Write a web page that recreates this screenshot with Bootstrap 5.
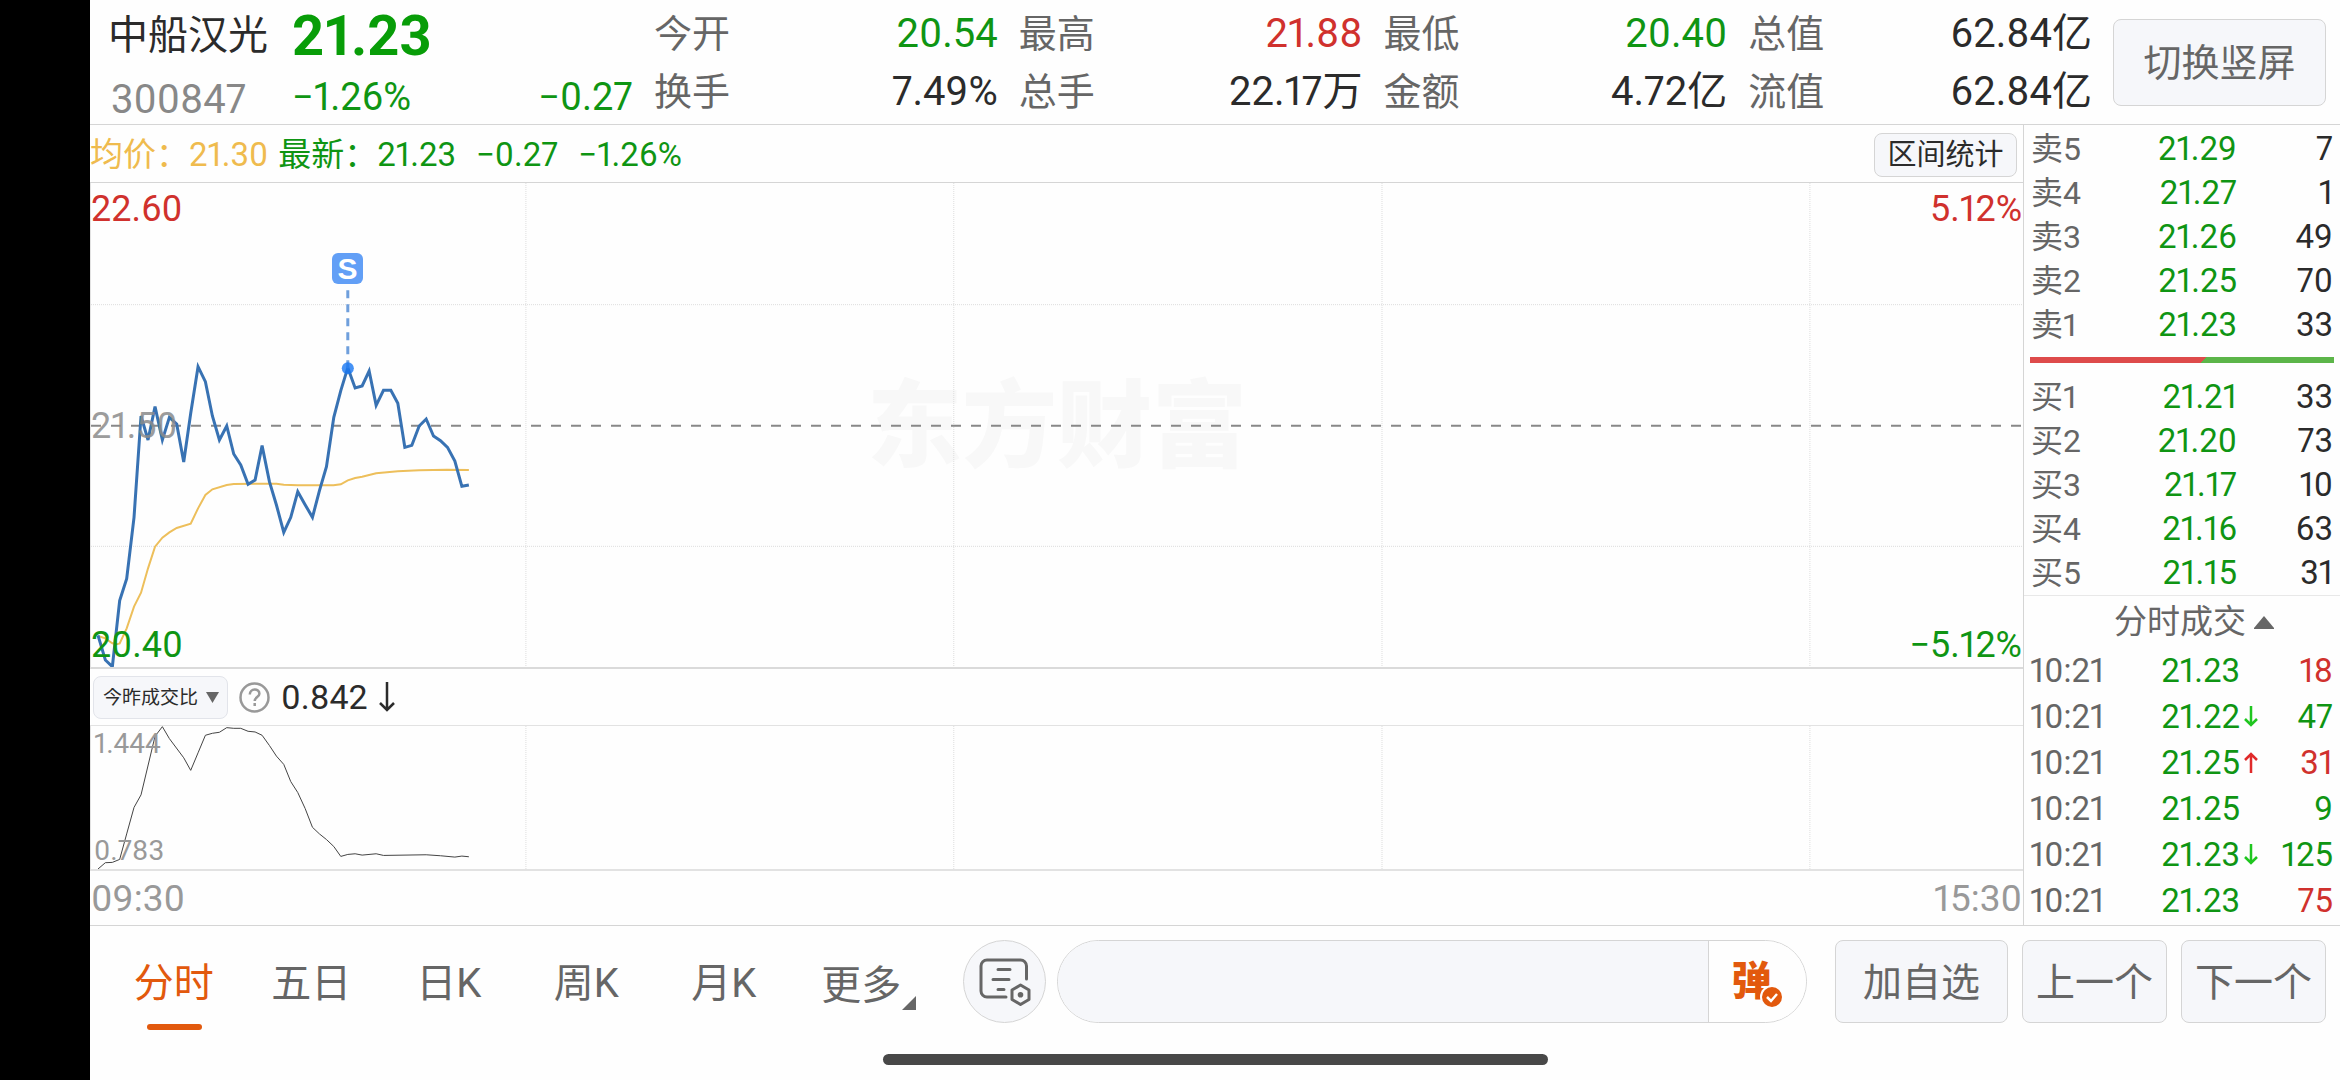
<!DOCTYPE html>
<html lang="zh-CN">
<head>
<meta charset="utf-8">
<meta name="viewport" content="width=device-width, initial-scale=1">
<title>中船汉光 300847</title>
<link rel="stylesheet" href="https://cdn.jsdelivr.net/npm/bootstrap@5.3.0/dist/css/bootstrap.min.css">
<style>
:root{--up:#d0312d;--down:#0f9513;--ink:#2b2b2b;--label:#666;--muted:#999;--line:#d5d5d5;--fill:#f6f7fa;--brand:#e2590d}
body{font-family:Roboto,"Noto Sans CJK SC",sans-serif;font-variant-numeric:proportional-nums;color:var(--ink);background:#fefefe}
.up{color:var(--up)!important}.down{color:var(--down)!important}
.cutout{width:90px;background:#000}
a{color:inherit;text-decoration:none}
button,select,input{font-family:inherit}

.quote-head{height:125px;border-bottom:1px solid var(--line);padding:0 14px 0 16px;gap:21px}
.quote-id{width:160px;margin-right:26px;padding-top:2px}
.quote-name{font-size:40px;line-height:68px;padding-left:2px}
.quote-code{font-size:40px;line-height:60px;color:#888;padding-left:5px}
.quote-price{width:341px;padding-top:2px}
.price-now{font-size:56px;line-height:68px;font-weight:700;color:#089d08}
.price-move{font-size:38px;line-height:54px}
.stats{display:grid;grid-template-columns:repeat(4,1fr);align-content:start;column-gap:21px;font-size:40px;line-height:58px;padding-top:5px}
.stats dt{font-weight:400;font-size:38px;color:var(--label)}
.stats dd{margin:0}
.soft-btn{background:var(--fill);border:1px solid var(--line);border-radius:8px;color:var(--label);padding:0;font-size:38px;line-height:1}
.flip-btn{width:213px;height:87px;margin-top:19px}

.avg-bar{height:58px;border-bottom:1px solid var(--line);font-size:33px;line-height:57px;padding:2px 6px 0 0}
.avg-tag{color:#efbb4e;margin-right:10px}
.range-btn{width:143px;height:44px;font-size:29px;color:var(--ink);padding-top:2px}
.moves{gap:20px}

.plot{border-left:1px solid #e2e2e2;position:relative}
.plot svg.lines{display:block;width:100%;height:100%;position:relative}
.plot-main{height:486px;border-bottom:2px solid #dadada}
.plot-sub{height:146px;border-top:1px solid #e2e2e2;border-bottom:2px solid #e2e2e2}
.lines *{vector-effect:non-scaling-stroke;fill:none}
.grid-l{stroke:#ddd;stroke-width:1;stroke-dasharray:1 1}
.axis{position:absolute;font-size:36px;line-height:40px}
.a-l{left:0}.a-r{right:1px}.a-t{top:6px}.a-m{top:50%;margin-top:-19px;color:#8c8c8c;opacity:.85}.a-b{bottom:2px}
.sub-axis{position:absolute;left:3px;font-size:28px;line-height:36px;color:var(--muted)}
.wmark{position:absolute;inset:0;padding-top:6px;color:#f8f8f8;font-size:95px;font-weight:900}
.sell-pin{position:absolute;left:13.3%;top:14.4%;width:31px;height:31px;margin-left:-16px;border-radius:6px;background:#629ff6;color:#fff;font:700 30px/31px "Liberation Sans",sans-serif;text-align:center}
.ratio-bar{height:56px;gap:11px;padding-left:3px;font-size:34px}
.ratio-pick{position:relative}
.ratio-pick select{display:block;appearance:none;width:135px;height:43px;font-size:19px;color:var(--ink);padding:0 0 0 9px;border-color:#e2e4ea}
.ratio-pick svg{position:absolute;right:9px;top:16px;pointer-events:none}
.time-row{height:54px;font-size:37px;line-height:56px;color:var(--muted);padding:0 1px}

.book{width:317px;border-left:1px solid var(--line);padding-top:2px}
.book table{margin:0;font-size:33px;table-layout:fixed;width:100%}
.book td,.book th{padding:0;font-weight:400;border:0;background:none}
.book th{color:var(--label);font-size:32px;padding-left:7px}
.orders td,.orders th{height:44px;line-height:44px}
.orders td:last-child,.ticks td:last-child{padding-right:7px}
.force{margin:10px 6px 12px;height:6px;background:linear-gradient(135deg,#de4b4b 57%,#5cb549 57%)}
.buys{border-bottom:1px solid #e8e8e8}
.ticks-btn{height:52px;font-size:33px;color:var(--label);background:none;border:0;gap:8px;padding:0 0 0 24px}
.ticks td,.ticks th{height:46px;line-height:46px}
.book .ticks th{font-size:33px;padding-left:6px}
.tick-dir{width:14px;margin:0 0 6px 4px}

.foot{border-top:1px solid var(--line);padding:14px 14px 0 15px}
.period-nav{width:825px;font-size:40px;color:var(--label);flex-wrap:nowrap}
.period-nav>*{flex:1 1 0;text-align:center;line-height:88px;height:91px;position:relative;background:none;border:0;padding:0;color:inherit}
.period-nav .on{color:var(--brand)}
.period-nav .on::after{content:"";position:absolute;left:50%;bottom:1px;width:55px;height:6px;margin-left:-27px;border-radius:3px;background:var(--brand)}
.corner{position:absolute;right:14px;top:56px}
.note-btn{width:83px;height:83px;border-radius:50%;margin-left:33px}
.chat{height:83px;border:1px solid var(--line);border-radius:42px;overflow:hidden;margin:0 28px 0 11px}
.chat input{border:0;border-right:1px solid var(--line);background:var(--fill);font-size:32px;padding:0 30px;border-radius:0;min-width:0}
.danmu{width:97px;border:0;background:#fefefe;position:relative;color:var(--brand);font-size:40px;font-weight:900;line-height:80px;padding:0 12px 0 0}
.danmu svg{position:absolute;left:51px;top:44px}
.foot .soft-btn{height:83px}
.act{width:145px}
.foot .act{font-size:39px;padding-top:4px}
.foot .act-add{width:173px}
.act-row{gap:14px}
.home-bar{width:665px;height:11px;border-radius:6px;background:#484848;margin:23px auto 17px}
</style>
</head>
<body>
<div class="d-flex min-vh-100">
<div class="cutout flex-shrink-0"></div>
<main class="flex-fill d-flex flex-column">
  <header class="quote-head d-flex">
    <div class="d-flex">
      <div class="quote-id">
        <div class="quote-name text-nowrap">中船汉光</div>
        <div class="quote-code">300847</div>
      </div>
      <div class="quote-price">
        <div class="price-now">21.23</div>
        <div class="price-move down d-flex justify-content-between"><span>−1.26%</span><span>−0.27</span></div>
      </div>
    </div>
    <dl class="stats flex-fill mb-0">
      <div class="d-flex justify-content-between"><dt>今开</dt><dd class="down">20.54</dd></div>
      <div class="d-flex justify-content-between"><dt>最高</dt><dd class="up">21.88</dd></div>
      <div class="d-flex justify-content-between"><dt>最低</dt><dd class="down">20.40</dd></div>
      <div class="d-flex justify-content-between"><dt>总值</dt><dd>62.84亿</dd></div>
      <div class="d-flex justify-content-between"><dt>换手</dt><dd>7.49%</dd></div>
      <div class="d-flex justify-content-between"><dt>总手</dt><dd>22.17万</dd></div>
      <div class="d-flex justify-content-between"><dt>金额</dt><dd>4.72亿</dd></div>
      <div class="d-flex justify-content-between"><dt>流值</dt><dd>62.84亿</dd></div>
    </dl>
    <button type="button" class="btn soft-btn flip-btn flex-shrink-0">切换竖屏</button>
  </header>

  <div class="d-flex">
    <section class="flex-fill">
      <div class="avg-bar d-flex align-items-center">
        <span class="avg-tag">均价：21.30</span>
        <span class="down">最新：</span>
        <span class="moves down d-flex"><span>21.23</span><span>−0.27</span><span>−1.26%</span></span>
        <button type="button" class="btn soft-btn range-btn ms-auto">区间统计</button>
      </div>
      <div class="plot plot-main">
        <div class="wmark d-flex align-items-center justify-content-center">东方财富</div>
        <svg class="lines" viewBox="33 9 5793 1452" preserveAspectRatio="none" role="img" aria-label="分时走势">
          <path class="grid-l" d="M33 374H5826M33 1099H5826M1337 9V1461M2620 9V1461M3904 9V1461M5187 9V1461"/>
          <path d="M33 737H5826" stroke="#888" stroke-width="2" stroke-dasharray="10 10"/>
          <polyline stroke="#edbf5b" stroke-width="2" points="54,1368 76,1375 97,1390 110,1393 119,1390 140,1345 162,1280 183,1238 204,1165 225,1100 247,1073 268,1057 290,1044 332,1031 354,985 376,945 397,928 440,915 461,912 568,911 589,911 611,914 653,916 760,916 782,913 803,901 825,894 846,890 888,880 953,874 1017,871 1100,869 1166,870"/>
          <polyline stroke="#3872b3" stroke-width="3" points="54,1366 76,1440 97,1460 119,1262 140,1196 162,1012 183,708 204,780 225,680 247,780 268,712 290,732 311,846 332,700 354,560 376,605 397,708 418,780 440,738 461,822 482,855 504,913 525,900 546,797 568,905 589,975 611,1057 632,1012 653,935 675,974 697,1012 718,932 739,860 761,712 782,632 803,563 825,624 846,618 867,573 888,676 910,631 932,631 953,670 974,802 995,796 1017,738 1038,717 1060,768 1081,782 1102,802 1124,843 1145,919 1166,915"/>
          <path d="M803 331V565" stroke="#6f9fdc" stroke-width="3" stroke-dasharray="8 6"/>
          <path d="M803 565h.1" stroke="#1877f2" stroke-opacity=".8" stroke-width="12" stroke-linecap="round"/>
        </svg>
        <span class="axis a-l a-t up">22.60</span>
        <span class="axis a-l a-m">21.50</span>
        <span class="axis a-l a-b down">20.40</span>
        <span class="axis a-r a-t up">5.12%</span>
        <span class="axis a-r a-b down">−5.12%</span>
        <span class="sell-pin">S</span>
      </div>
      <div class="ratio-bar d-flex align-items-center">
        <div class="ratio-pick">
          <select class="soft-btn" aria-label="指标"><option>今昨成交比</option></select>
          <svg width="13" height="11" viewBox="0 0 13 11"><path d="M0 0h13L6.500 11z" fill="#666"/></svg>
        </div>
        <svg width="31" height="31" viewBox="0 0 31 31" fill="none" stroke="#999" stroke-width="2.500"><circle cx="15.500" cy="15.500" r="14"/><path d="M10.800 12.500c0-6.500 9.600-6.500 9.600-.8 0 3.300-4.700 3.500-4.700 7.300M15.700 21v3"/></svg>
        <span>0.842</span>
        <svg width="16" height="30" viewBox="0 0 16 30" fill="none" stroke="#2b2b2b" stroke-width="2.500"><path d="M8 0v28M1 21l7 7 7-7"/></svg>
      </div>
      <div class="plot plot-sub">
        <svg class="lines" viewBox="33 194 5793 432" preserveAspectRatio="none" role="img" aria-label="今昨成交比走势">
          <path class="grid-l" d="M1337 194V626M2620 194V626M3904 194V626M5187 194V626"/>
          <polyline stroke="#444" stroke-width="1" points="54,626 76,607 97,606 119,597 140,520 162,440 183,402 225,225 247,196 268,232 311,290 332,328 354,275 376,222 397,216 418,213 440,199 461,201 482,201 504,210 525,212 546,222 568,253 589,285 611,310 632,362 653,395 675,443 697,500 718,520 739,537 761,558 782,588 803,582 825,580 846,584 888,580 910,585 1038,583 1081,586 1124,590 1145,587 1166,589"/>
        </svg>
        <span class="sub-axis top-0">1.444</span>
        <span class="sub-axis bottom-0">0.783</span>
      </div>
      <div class="time-row d-flex justify-content-between"><span>09:30</span><span>15:30</span></div>
    </section>

    <aside class="book flex-shrink-0">
      <table class="orders text-end">
        <colgroup><col style="width:90px"><col style="width:123px"><col></colgroup>
        <tbody>
        <tr><th class="text-start" scope="row">卖5</th><td class="down">21.29</td><td>7</td></tr>
        <tr><th class="text-start" scope="row">卖4</th><td class="down">21.27</td><td>1</td></tr>
        <tr><th class="text-start" scope="row">卖3</th><td class="down">21.26</td><td>49</td></tr>
        <tr><th class="text-start" scope="row">卖2</th><td class="down">21.25</td><td>70</td></tr>
        <tr><th class="text-start" scope="row">卖1</th><td class="down">21.23</td><td>33</td></tr>
        </tbody>
      </table>
      <div class="force"></div>
      <div class="buys">
      <table class="orders text-end">
        <colgroup><col style="width:90px"><col style="width:123px"><col></colgroup>
        <tbody>
        <tr><th class="text-start" scope="row">买1</th><td class="down">21.21</td><td>33</td></tr>
        <tr><th class="text-start" scope="row">买2</th><td class="down">21.20</td><td>73</td></tr>
        <tr><th class="text-start" scope="row">买3</th><td class="down">21.17</td><td>10</td></tr>
        <tr><th class="text-start" scope="row">买4</th><td class="down">21.16</td><td>63</td></tr>
        <tr><th class="text-start" scope="row">买5</th><td class="down">21.15</td><td>31</td></tr>
        </tbody>
      </table>
      </div>
      <button type="button" class="ticks-btn w-100 d-flex align-items-center justify-content-center">分时成交
        <svg width="20" height="13" viewBox="0 0 20 13"><path d="M10 0l10 12v1H0v-1z" fill="#666"/></svg>
      </button>
      <table class="ticks text-end">
        <colgroup><col style="width:90px"><col style="width:144px"><col></colgroup>
        <tbody>
        <tr><th class="text-start" scope="row">10:21</th><td class="down">21.23<svg class="tick-dir" height="21"></svg></td><td class="up">18</td></tr>
        <tr><th class="text-start" scope="row">10:21</th><td class="down">21.22<svg class="tick-dir" height="21" viewBox="0 0 14 21" fill="none" stroke="#1fc61f" stroke-width="2.500"><path d="M7 0v19M1 13l6 6 6-6"/></svg></td><td class="down">47</td></tr>
        <tr><th class="text-start" scope="row">10:21</th><td class="down">21.25<svg class="tick-dir" height="21" viewBox="0 0 14 21" fill="none" stroke="#e02a2a" stroke-width="2.500"><path d="M7 21V2M1 8l6-6 6 6"/></svg></td><td class="up">31</td></tr>
        <tr><th class="text-start" scope="row">10:21</th><td class="down">21.25<svg class="tick-dir" height="21"></svg></td><td class="down">9</td></tr>
        <tr><th class="text-start" scope="row">10:21</th><td class="down">21.23<svg class="tick-dir" height="21" viewBox="0 0 14 21" fill="none" stroke="#1fc61f" stroke-width="2.500"><path d="M7 0v19M1 13l6 6 6-6"/></svg></td><td class="down">125</td></tr>
        <tr><th class="text-start" scope="row">10:21</th><td class="down">21.23<svg class="tick-dir" height="21"></svg></td><td class="up">75</td></tr>
        </tbody>
      </table>
    </aside>
  </div>

  <footer class="foot">
    <div class="d-flex align-items-start">
      <nav class="period-nav nav flex-shrink-0">
        <a class="on" href="#" aria-current="page">分时</a>
        <a href="#">五日</a>
        <a href="#">日K</a>
        <a href="#">周K</a>
        <a href="#">月K</a>
        <button type="button">更多<svg class="corner" width="14" height="14" viewBox="0 0 14 14"><path d="M14 0v14H0z" fill="#666"/></svg></button>
      </nav>
      <button type="button" class="btn soft-btn note-btn flex-shrink-0" aria-label="笔记设置">
        <svg width="52" height="48" viewBox="0 0 52 48" fill="none" stroke="#666" stroke-width="3" stroke-linecap="round"><path d="M47.500 21V8a6 6 0 0 0-6-6H8a6 6 0 0 0-6 6v25a6 6 0 0 0 6 6h19M19 11.500h12M14 21.500h16M19 31.500h6"/><path d="M41.500 27l8.500 5v9.500l-8.500 5-8.500-5V32z" stroke-linejoin="round"/><circle cx="41.500" cy="36.700" r="2.800" fill="#666" stroke="none"/></svg>
      </button>
      <div class="chat d-flex flex-fill">
        <input type="text" class="flex-fill" aria-label="发弹幕">
        <button type="button" class="danmu">弹
          <svg width="24" height="24" viewBox="0 0 24 24"><circle cx="12" cy="12" r="12" fill="#fefefe"/><circle cx="12" cy="12" r="10" fill="#e2590d"/><path d="M7 12l4 4 6-7" fill="none" stroke="#fff" stroke-width="2.500"/></svg>
        </button>
      </div>
      <div class="act-row d-flex flex-shrink-0">
        <button type="button" class="btn soft-btn act act-add">加自选</button>
        <button type="button" class="btn soft-btn act">上一个</button>
        <button type="button" class="btn soft-btn act">下一个</button>
      </div>
    </div>
    <div class="home-bar"></div>
  </footer>
</main>
</div>
<script src="https://cdn.jsdelivr.net/npm/bootstrap@5.3.0/dist/js/bootstrap.bundle.min.js"></script>
</body>
</html>
